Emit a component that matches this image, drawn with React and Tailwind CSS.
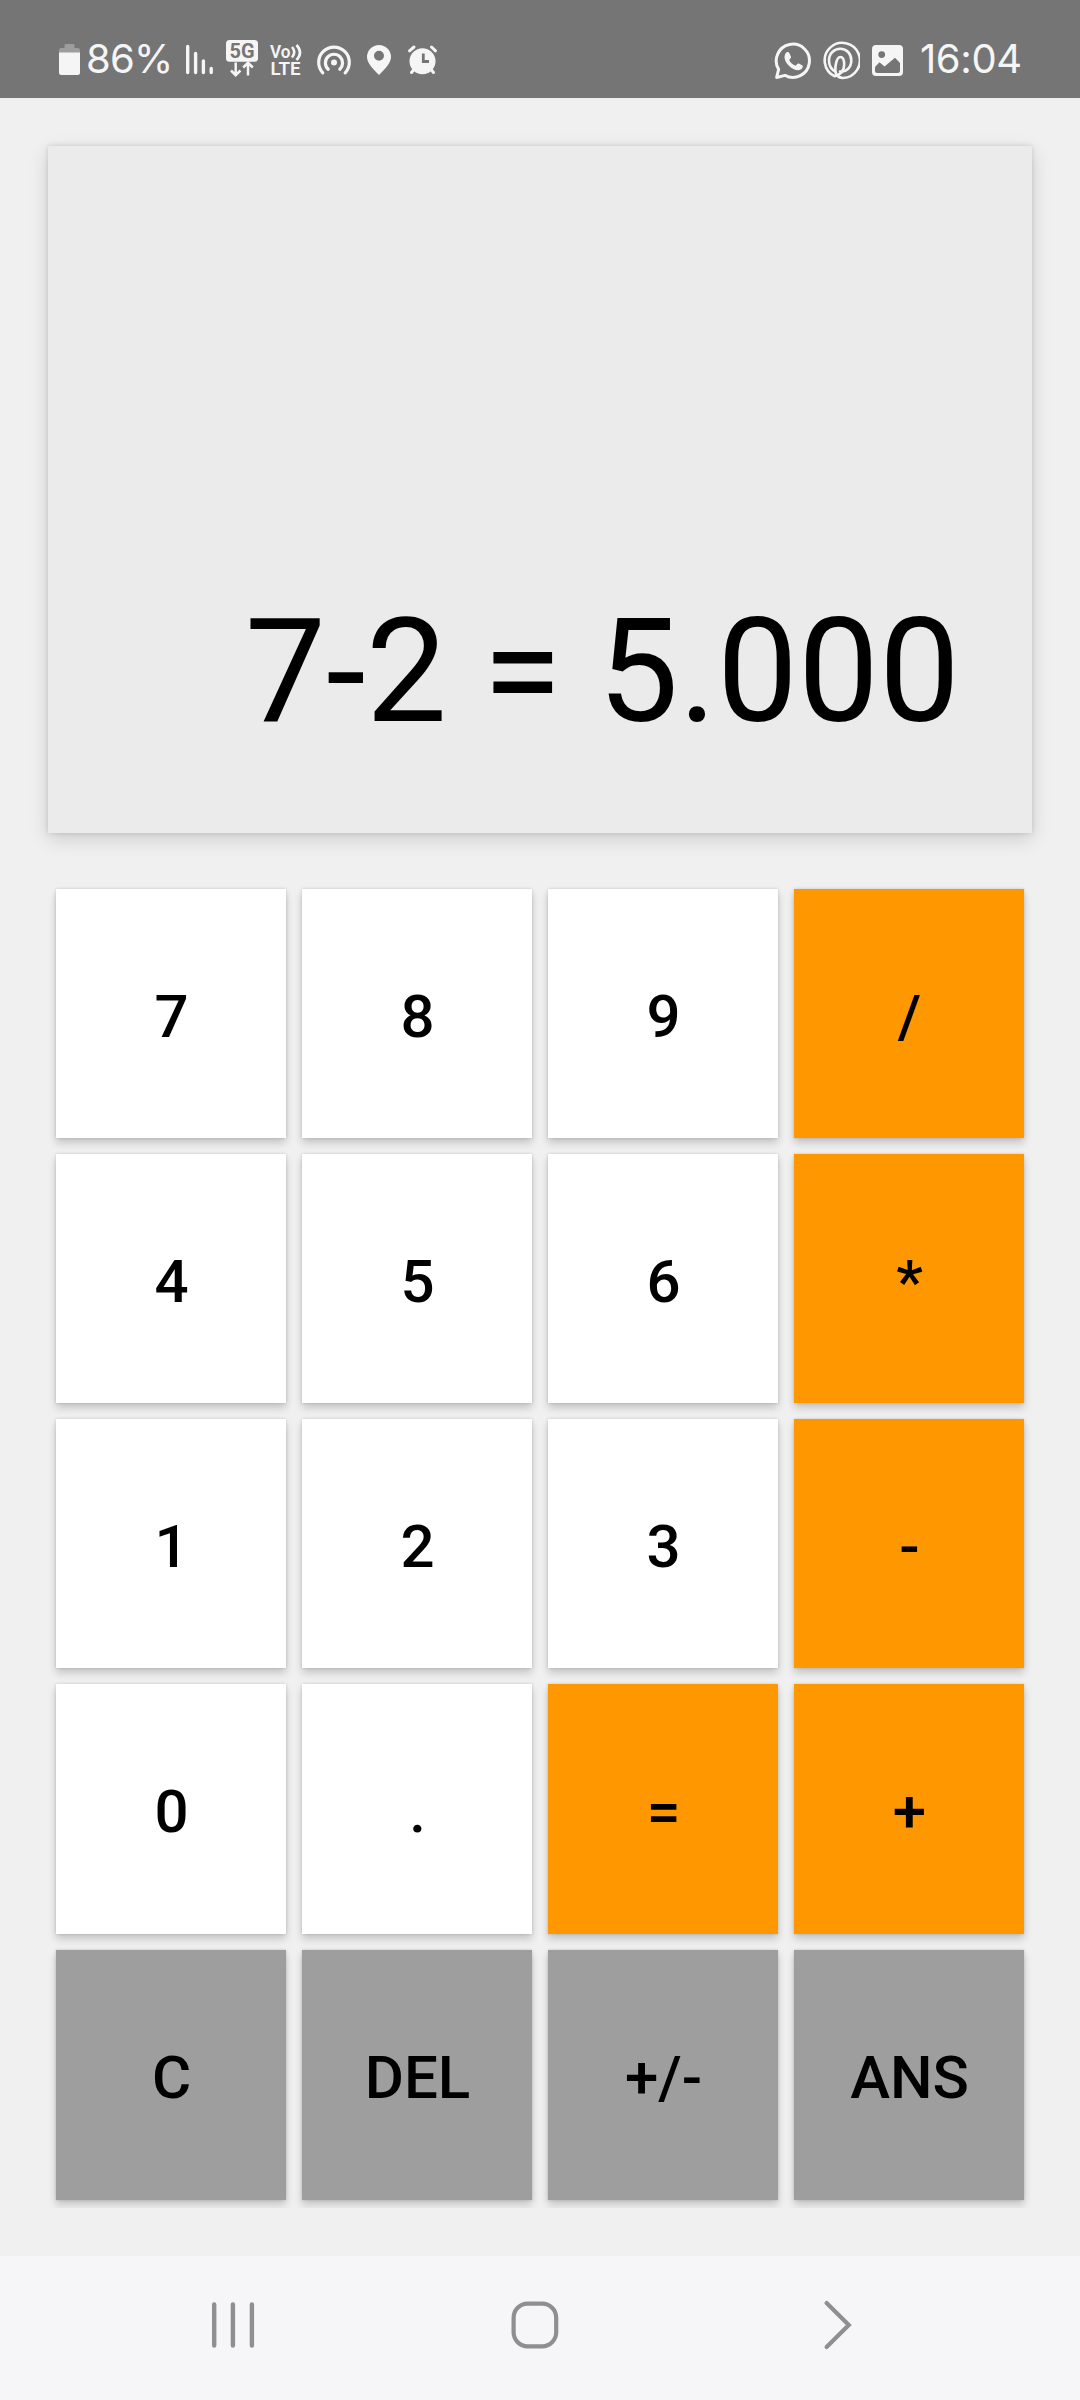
import React from "react";

const KEYS = [
  ["7", "8", "9", "/"],
  ["4", "5", "6", "*"],
  ["1", "2", "3", "-"],
  ["0", ".", "=", "+"],
  ["C", "DEL", "+/-", "ANS"],
];

function keyColor(row, label) {
  if (row === 4) return "bg-[#9e9e9e]";
  if ("/*-=+".includes(label)) return "bg-[#ff9800]";
  return "bg-white";
}

function StatusBar() {
  return (
    <header className="flex h-[98px] shrink-0 items-center bg-[#757575] pl-[59px] font-['Inter',sans-serif] text-[40px] leading-none text-[#f5f5f5]">
      <svg className="h-[98px] w-[21px] shrink-0" viewBox="59 0 21 98">
        <path d="M66 44h7a1.500 1.500 0 0 1 1.500 1.500V48h3a2.500 2.500 0 0 1 2.500 2.500V53H59v-2.500A2.500 2.500 0 0 1 61.500 48H64.500v-2.500A1.500 1.500 0 0 1 66 44z" fill="#9d9d9d" />
        <path d="M59 52.500h21v20a2.500 2.500 0 0 1-2.500 2.500h-16a2.500 2.500 0 0 1-2.500-2.500z" fill="#f5f5f5" />
      </svg>
      <span className="ml-[6px] w-[94px] shrink-0 pt-[20px] tracking-[-0.8px] whitespace-nowrap">86%</span>
      <svg className="ml-[6px] h-[98px] w-[28px] shrink-0" viewBox="186 0 28 98" fill="none" stroke="#f5f5f5" strokeWidth="3.400" strokeLinecap="round">
        <path d="M187.700 46.500V72.500M195.600 53.500V72.500M203.400 61V72.500M211.200 68.500V72.500" />
      </svg>
      <svg className="ml-[12px] h-[98px] w-[32px] shrink-0" viewBox="226 0 32 98">
        <rect x="226" y="40" width="32" height="21.700" rx="3.500" fill="#f5f5f5" />
        <text x="242" y="57.800" textAnchor="middle" fontFamily="Roboto, sans-serif" fontSize="20" fontWeight="700" fill="#757575" textLength="25" lengthAdjust="spacingAndGlyphs">5G</text>
        <path d="M235.700 62.500V75M231 70.500l4.700 4.700 4.700-4.700M248 75.500V63.500M243.200 67.500l4.800-4.700 4.800 4.700" fill="none" stroke="#f5f5f5" strokeWidth="2.500" />
      </svg>
      <svg className="ml-[11px] h-[98px] w-[34px] shrink-0" viewBox="269 0 34 98" fill="#f5f5f5" fontFamily="Roboto, sans-serif">
        <text x="270" y="58" fontSize="17.500" fontWeight="600" textLength="20.500" lengthAdjust="spacingAndGlyphs">Vo</text>
        <text x="270.500" y="75" fontSize="18" fontWeight="600" textLength="30" lengthAdjust="spacingAndGlyphs">LTE</text>
        <path d="M292 47q4.500 5 0 10.500M296.500 45q7 7.500 0 15" fill="none" stroke="#f5f5f5" strokeWidth="2.600" />
      </svg>
      <svg className="ml-[13px] h-[98px] w-[36px] shrink-0" viewBox="316 0 36 98" fill="none" stroke="#f5f5f5" strokeWidth="3.200" strokeLinecap="round">
        <path d="M322.800 72.800A15.300 15.300 0 1 1 345.200 72.800M328.200 69.200A8.600 8.600 0 1 1 339.800 69.200" />
        <circle cx="334" cy="62.500" r="3" fill="#f5f5f5" stroke="none" />
      </svg>
      <svg className="ml-[14px] h-[98px] w-[26px] shrink-0" viewBox="366 0 26 98">
        <path fillRule="evenodd" d="M379 45a12 12 0 0 1 12 12c0 6-6 12-12 18-6-6-12-12-12-18a12 12 0 0 1 12-12zm0 5.800a5 5 0 1 0 0 10 5 5 0 0 0 0-10z" fill="#f5f5f5" />
      </svg>
      <svg className="ml-[15px] h-[98px] w-[31px] shrink-0" viewBox="407 0 31 98" fill="none" stroke="#f5f5f5" strokeWidth="3" strokeLinecap="round">
        <circle cx="422.500" cy="61.200" r="13" fill="#f5f5f5" stroke="none" />
        <path d="M409.500 50.800l4.500-3.800M431.500 47l4 3.800M413.500 70l-2 2.500M431.500 70l2 2.500" />
        <path d="M423.300 53.500V61.500H429" stroke="#757575" strokeWidth="2.800" strokeLinecap="butt" />
      </svg>
      <svg className="ml-[336px] h-[98px] w-[38px] shrink-0" viewBox="774 0 38 98">
        <path d="M776.600 77.500l2-8.200A16.600 16.600 0 1 1 785 75.400z" fill="none" stroke="#f5f5f5" strokeWidth="3" strokeLinejoin="round" />
        <path d="M785.500 53.500c1.500-2 3.200-1.800 3.800-.5l1.600 3.600c.4 1-.1 1.500-1.700 3.300 1.300 2.700 3.400 4.600 6.500 5.800 1.600-2 2.200-2.600 3.200-2.100l3.500 1.800c.8.4.4 2.600-1 3.700-3.500 2.700-8.500.5-12.200-3-3.500-3.400-6.200-8.700-3.700-12.600z" fill="#f5f5f5" />
      </svg>
      <svg className="ml-[8px] h-[98px] w-[40px] shrink-0" viewBox="820 0 40 98" fill="none" stroke="#f5f5f5" strokeWidth="2.600" strokeLinecap="round">
        <path d="M834.500 76.200A17.600 17.600 0 1 1 843 78C835.500 77.500 834.500 72 835.800 64.500C836.700 59.500 838 57 840.300 57C843 57 844.200 60.500 844.200 64.500C844.200 70 841.500 74.500 834.500 76.200" />
        <path d="M835.300 71.500C831.500 69.500 829 65.500 829 60.500C829 53.500 834 48.800 840.300 48.800C846.500 48.800 851.300 53.500 851.300 60.500C851.300 67.500 846 72.500 840 71.500" />
      </svg>
      <svg className="ml-[12px] h-[98px] w-[31px] shrink-0" viewBox="872 0 31 98">
        <path fillRule="evenodd" d="M876 45h23a4 4 0 0 1 4 4v23a4 4 0 0 1-4 4h-23a4 4 0 0 1-4-4V49a4 4 0 0 1 4-4zm5.700 6.200a3.400 3.400 0 1 0 0 6.800 3.400 3.400 0 0 0 0-6.800zM875 67v3.500a2.500 2.500 0 0 0 2.500 2.500h20a2.500 2.500 0 0 0 2.500-2.500V63l-5-5.200-10.500 8.600-5-4.200z" fill="#f5f5f5" />
      </svg>
      <span className="ml-[17px] shrink-0 pt-[20px] tracking-[-0.4px] whitespace-nowrap">16:04</span>
    </header>
  );
}

function NavigationBar() {
  return (
    <nav className="flex h-[144px] shrink-0 items-center bg-[#f6f6f8] pb-[6px] pl-[208px] text-[#8f8f8f]">
      <svg className="h-[50px] w-[50px]" viewBox="208 2300 50 50" fill="none" stroke="currentColor" strokeWidth="4.400" strokeLinecap="round">
        <path d="M214.200 2304.500V2345.500M232.900 2304.500V2345.500M251.900 2304.500V2345.500" />
      </svg>
      <svg className="ml-[252px] h-[50px] w-[50px]" viewBox="510 2300 50 50" fill="none" stroke="currentColor" strokeWidth="4.200">
        <rect x="513.600" y="2303.700" width="42.600" height="42.600" rx="14" />
      </svg>
      <svg className="ml-[260px] h-[50px] w-[34px]" viewBox="820 2300 34 50" fill="none" stroke="currentColor" strokeWidth="4.200" strokeLinecap="round">
        <path d="M826.600 2303L848.800 2325L826.600 2347" />
      </svg>
    </nav>
  );
}

export default function App() {
  return (
    <div className="flex h-[2400px] w-[1080px] flex-col overflow-hidden bg-[#f0f0f0] font-['Roboto',sans-serif] text-black">
      <StatusBar />
      <main className="flex flex-1 flex-col px-[48px] pt-[48px]">
        <section className="flex h-[687px] shrink-0 items-end justify-end bg-[#ebebeb] pr-[72px] pb-[77px] shadow-[0_6px_18px_rgba(0,0,0,0.15),0_0_5px_rgba(0,0,0,0.13)]">
          <output className="text-[144px] leading-[169px] tracking-[0.1px] whitespace-nowrap">7-2 = 5.000</output>
        </section>
        <section className="mt-[48px] grid h-[1327px] shrink-0 grid-cols-4 grid-rows-[265px_265px_265px_266px_266px] overflow-hidden">
          {KEYS.map((row, r) =>
            row.map((label) => (
              <button
                key={label}
                className={`m-[8px] flex items-center justify-center pt-[6px] pl-px text-[60px] leading-[70px] font-medium shadow-[0_5px_8px_rgba(0,0,0,0.18),0_0_3px_rgba(0,0,0,0.15)] ${keyColor(r, label)}`}
              >
                {label}
              </button>
            ))
          )}
        </section>
      </main>
      <NavigationBar />
    </div>
  );
}
